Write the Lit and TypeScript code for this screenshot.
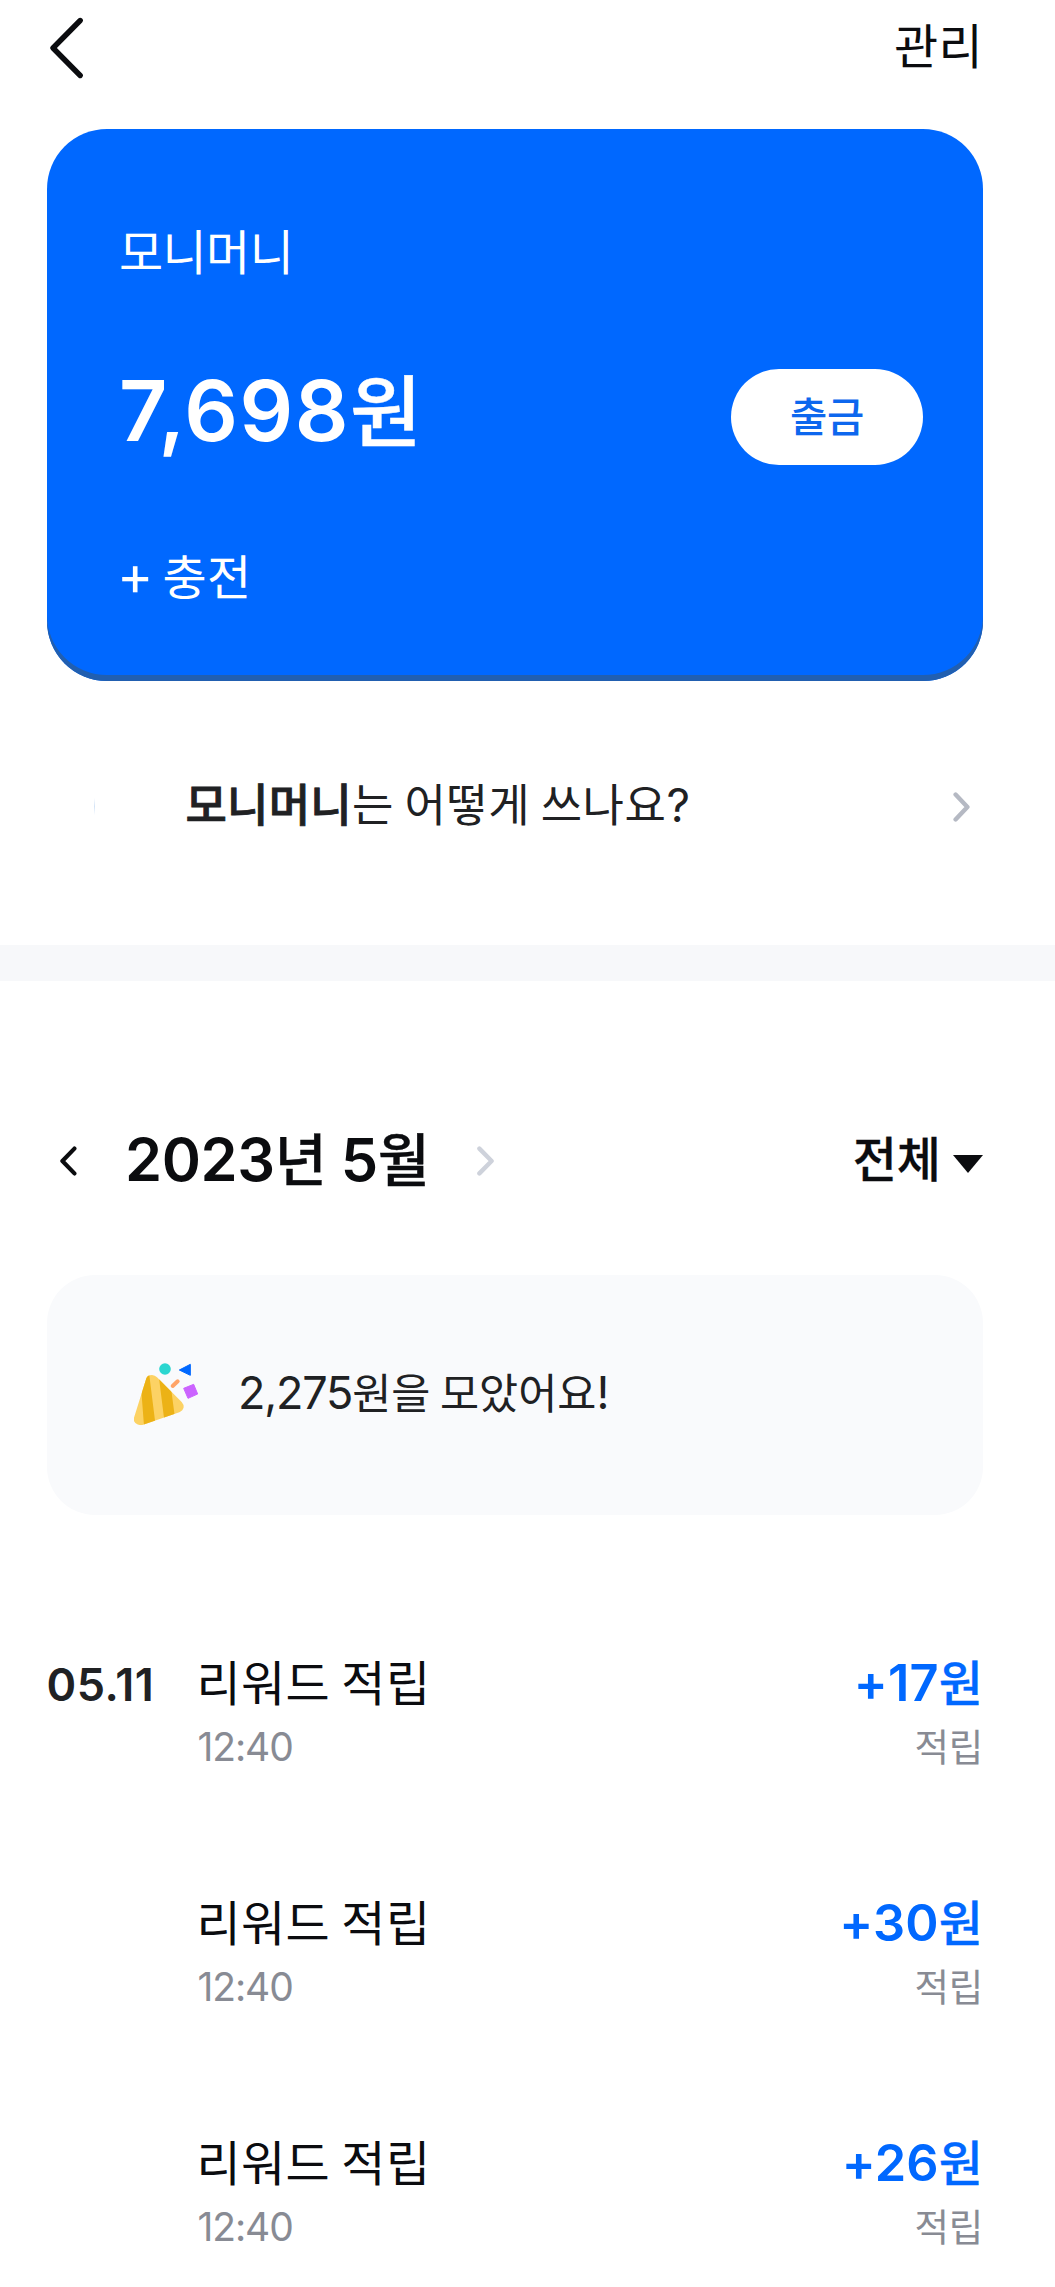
import { LitElement, html, css } from "lit";
import { customElement, property } from "lit/decorators.js";

interface Entry {
  date: string;
  title: string;
  time: string;
  amount: string;
  kind: string;
}

const ENTRIES: Entry[] = [
  { date: "05.11", title: "리워드 적립", time: "12:40", amount: "+17", kind: "적립" },
  { date: "", title: "리워드 적립", time: "12:40", amount: "+30", kind: "적립" },
  { date: "", title: "리워드 적립", time: "12:40", amount: "+26", kind: "적립" },
];

@customElement("history-row")
export class HistoryRow extends LitElement {
  @property({ attribute: false }) entry!: Entry;

  static styles = css`
    :host {
      display: grid;
      grid-template-columns: 150px 1fr auto;
      grid-template-rows: 60px 60px;
      row-gap: 5px;
      align-items: baseline;
      line-height: 60px;
      white-space: nowrap;
      font-family: "Noto Sans CJK KR", sans-serif;
    }
    .num { font-family: Inter, sans-serif; }
    .date { font-size: 45px; font-weight: 600; letter-spacing: 0.5px; color: #202123; }
    .title { font-size: 48px; letter-spacing: 0.4px; color: #0b0c0f; }
    .amount {
      display: flex;
      align-items: baseline;
      justify-content: flex-end;
      font-weight: 500;
      font-size: 48px;
      color: #0068ff;
    }
    .amount .won { -webkit-text-stroke: 0.3px #0068ff; }
    .amount .num { font-size: 50.5px; font-weight: 600; letter-spacing: 0.2px; }
    .time { grid-column: 2; font-size: 39px; letter-spacing: -1.1px; color: #888b94; padding-left: 1px; }
    .kind { font-size: 37.5px; letter-spacing: -0.3px; color: #888b94; text-align: right; }
  `;

  render() {
    const e = this.entry;
    return html`
      <div class="date num">${e.date}</div>
      <div class="title">${e.title}</div>
      <div class="amount"><span class="num">${e.amount}</span><span class="won">원</span></div>
      <div class="time num">${e.time}</div>
      <div class="kind">${e.kind}</div>
    `;
  }
}

@customElement("app-root")
export class AppRoot extends LitElement {
  static styles = css`
    :host {
      display: block;
      box-sizing: border-box;
      width: 100%;
      min-height: 2287px;
      background: #fff;
      color: #0b0c0f;
      font-family: "Noto Sans CJK KR", sans-serif;
      line-height: 60px;
      white-space: nowrap;
    }
    svg { display: block; flex: none; }
    .num { font-family: Inter, sans-serif; }
    .line { display: flex; align-items: baseline; height: 60px; }

    .header {
      display: flex;
      justify-content: space-between;
      align-items: flex-start;
      height: 129px;
      padding: 13px 72px 0 47px;
      box-sizing: border-box;
    }
    .header svg { margin-top: 1px; }
    .manage { font-size: 48px; letter-spacing: 0.4px; }

    .card {
      box-sizing: border-box;
      height: 552px;
      margin: 0 72px 0 47px;
      padding: 90px 60px 0 70px;
      border-radius: 60px;
      background: #0068ff;
      box-shadow: inset 0 -6px 0 #215fb0;
      color: #fff;
    }
    .label { padding-left: 2px; font-size: 48px; letter-spacing: -0.6px; }
    .balance {
      display: flex;
      justify-content: space-between;
      align-items: flex-start;
      height: 96px;
      margin: 90px 0 79px;
    }
    .amount { margin-top: 8px; padding-left: 2px; font-size: 78px; font-weight: 500; }
    .amount .won { -webkit-text-stroke: 0.5px #fff; }
    .amount .num { font-size: 84px; font-weight: 600; letter-spacing: 1.5px; }
    .withdraw {
      width: 192px;
      height: 96px;
      border-radius: 48px;
      background: #fff;
      color: #0d67ee;
      font-size: 40.5px;
      font-weight: 500;
      letter-spacing: -0.3px;
      line-height: 92px;
      text-align: center;
    }
    .charge { gap: 9px; font-size: 48px; letter-spacing: 0.5px; }
    .charge .num { font-size: 55px; letter-spacing: 0; }

    .guide {
      display: flex;
      align-items: flex-start;
      height: 60px;
      margin: 92px 72px 112px 94px;
      color: #202123;
    }
    .tick {
      width: 1px;
      height: 17px;
      margin-top: 25px;
      background: linear-gradient(#fff, #d3e3f6, #fff);
    }
    .question { flex: 1; padding-left: 90.5px; font-size: 45px; letter-spacing: 0.5px; }
    .question b { font-weight: 500; letter-spacing: 0.2px; -webkit-text-stroke: 0.8px #202123; }
    .question .num { font-size: 46px; }
    .guide svg { margin: 19px 13px 0 0; }

    .divider { height: 36px; background: #f7f8fa; }

    .filter {
      display: flex;
      align-items: flex-start;
      height: 60px;
      margin: 145px 72px 89px 60px;
    }
    .filter .chev { margin-top: 20px; }
    .month { margin: 0 47px 0 48px; font-size: 56.5px; font-weight: 500; }
    .month .ko { -webkit-text-stroke: 0.4px #0b0c0f; }
    .month .num { font-size: 59.5px; font-weight: 600; letter-spacing: -0.4px; }
    .month .day { margin-left: 14px; }
    .all { margin-left: auto; font-size: 48px; font-weight: 500; -webkit-text-stroke: 0.3px #0b0c0f; }
    .caret { margin: 29px 0 0 12px; }

    .summary {
      display: flex;
      align-items: flex-start;
      box-sizing: border-box;
      height: 240px;
      margin: 0 72px 135px 47px;
      padding: 85px 60px 0 83px;
      border-radius: 48px;
      background: #f9fafc;
      color: #202123;
    }
    .saved { margin: 1px 0 0 36px; font-size: 42.5px; }
    .saved .num { font-size: 45px; letter-spacing: -1.2px; }

    .list { display: flex; flex-direction: column; gap: 115px; margin: 0 72px 0 46.5px; }
  `;

  render() {
    return html`
      <div class="header">
        <svg width="40" height="70" viewBox="47 14 40 70" fill="none" stroke="#0b0c0f" stroke-width="5.4" stroke-linecap="round" stroke-linejoin="round">
          <path d="M80.2 20.5 L53 48 L80.2 75.5" />
        </svg>
        <div class="manage">관리</div>
      </div>

      <section class="card">
        <div class="label line">모니머니</div>
        <div class="balance">
          <div class="amount line"><span class="num">7,698</span><span class="won">원</span></div>
          <div class="withdraw">출금</div>
        </div>
        <div class="charge line"><span class="num">+</span><span>충전</span></div>
      </section>

      <div class="guide">
        <span class="tick"></span>
        <div class="question line"><span><b>모니머니</b>는 어떻게 쓰나요</span><span class="num">?</span></div>
        <svg width="17" height="30" viewBox="0 0 17 30" fill="none" stroke="#b5b9c3" stroke-width="4.4" stroke-linecap="round" stroke-linejoin="round">
          <path d="M2.6 2.6 L14.4 15 L2.6 27.4" />
        </svg>
      </div>

      <div class="divider"></div>

      <div class="filter">
        <svg class="chev" width="17" height="30" viewBox="0 0 17 30" fill="none" stroke="#0b0c0f" stroke-width="4.2" stroke-linecap="round" stroke-linejoin="round">
          <path d="M14.4 2.6 L2.4 15 L14.4 27.4" />
        </svg>
        <div class="month line">
          <span class="num">2023</span><span class="ko">년</span><span class="num day">5</span><span class="ko">월</span>
        </div>
        <svg class="chev" width="17" height="30" viewBox="0 0 17 30" fill="none" stroke="#ced2db" stroke-width="4.4" stroke-linecap="round" stroke-linejoin="round">
          <path d="M2.4 2.6 L14.6 15 L2.4 27.4" />
        </svg>
        <div class="all">전체</div>
        <svg class="caret" width="30" height="18" viewBox="0 0 30 18" fill="#0b0c0f"><path d="M0 0 H30 L15 18 Z" /></svg>
      </div>

      <div class="summary">
        <svg width="72" height="70" viewBox="60 60 216 210">
          <defs>
            <clipPath id="cone">
              <path d="M109 115 Q113 105 126 105 Q135 106 141 112 L215 186 Q222 194 221 202 Q219 212 208 217 L97 255 Q84 257 76 249 Q70 242 72 233 Z" />
            </clipPath>
          </defs>
          <g clip-path="url(#cone)">
            <rect x="60" y="90" width="180" height="180" fill="#fcd264" />
            <path d="M90 100 L102 258 L137 258 L116 90 Z M144 90 L165 258 L198 258 L180 120 Z" fill="#ecb216" />
          </g>
          <circle cx="165" cy="87" r="17.5" fill="#2bd6d0" />
          <path d="M208 90 L241 73 V106 Z" fill="#0068ff" stroke="#0068ff" stroke-width="3" stroke-linejoin="round" />
          <path d="M188 138 L203 124" stroke="#ffa468" stroke-width="12" stroke-linecap="round" />
          <path d="M221 145 L251 133 L263 162 L234 175 Z" fill="#cb63ff" stroke="#cb63ff" stroke-width="3" stroke-linejoin="round" />
        </svg>
        <div class="saved line"><span class="num">2,275</span><span>원을 모았어요</span><span class="num">!</span></div>
      </div>

      <div class="list">${ENTRIES.map((e) => html`<history-row .entry=${e}></history-row>`)}</div>
    `;
  }
}
